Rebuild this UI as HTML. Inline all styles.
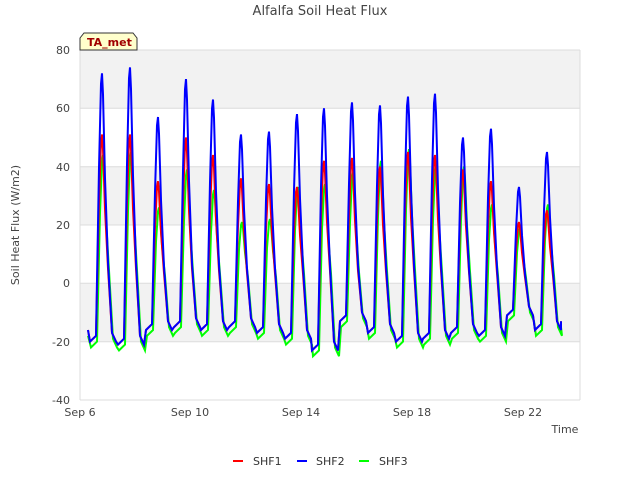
<!DOCTYPE html>
<html><head><meta charset="utf-8"><style>
body{margin:0;background:#fff;}
svg{display:block;font-family:"DejaVu Sans","Liberation Sans",sans-serif;}
</style></head><body>
<svg id="s" width="640" height="480" viewBox="0 0 640 480">
<rect x="0" y="0" width="640" height="480" fill="#fff"/>
<rect x="80" y="50" width="500" height="58.3" fill="#f2f2f2"/>
<rect x="80" y="166.7" width="500" height="58.3" fill="#f2f2f2"/>
<rect x="80" y="283.3" width="500" height="58.3" fill="#f2f2f2"/>
<g stroke="#dcdcdc" stroke-width="1">
<line x1="80" x2="580" y1="50" y2="50"/><line x1="80" x2="580" y1="108.3" y2="108.3"/>
<line x1="80" x2="580" y1="166.7" y2="166.7"/><line x1="80" x2="580" y1="225" y2="225"/>
<line x1="80" x2="580" y1="283.3" y2="283.3"/><line x1="80" x2="580" y1="341.7" y2="341.7"/>
<line x1="80" x2="580" y1="400" y2="400"/>
<line x1="80" x2="80" y1="50" y2="400"/><line x1="580" x2="580" y1="50" y2="400"/>
</g>
<g font-size="11" fill="#444" text-anchor="end">
<text x="70" y="54">80</text><text x="70" y="112">60</text><text x="70" y="171">40</text>
<text x="70" y="229">20</text><text x="70" y="287">0</text><text x="70" y="346">-20</text><text x="70" y="404">-40</text>
</g>
<g font-size="11" fill="#444" text-anchor="middle">
<text x="80" y="416">Sep 6</text><text x="190" y="416">Sep 10</text><text x="301" y="416">Sep 14</text>
<text x="412" y="416">Sep 18</text><text x="523" y="416">Sep 22</text>
</g>
<text x="320" y="15" font-size="13" fill="#444" text-anchor="middle">Alfalfa Soil Heat Flux</text>
<text x="565" y="433" font-size="11" fill="#444" text-anchor="middle">Time</text>
<text transform="translate(19,225) rotate(-90)" font-size="11" fill="#444" text-anchor="middle">Soil Heat Flux (W/m2)</text>
<g id="lines"></g>
<path d="M80,50 L80,38 L84,33 L133,33 L137,38 L137,50 Z" fill="#ffffcc" stroke="#333" stroke-width="1"/>
<text x="87" y="46" font-size="11" font-weight="bold" fill="#a00000">TA_met</text>
<line x1="233" x2="243" y1="461" y2="461" stroke="#f00" stroke-width="2"/>
<text x="253" y="465" font-size="11" fill="#333">SHF1</text>
<line x1="297" x2="307" y1="461" y2="461" stroke="#00f" stroke-width="2"/>
<text x="316" y="465" font-size="11" fill="#333">SHF2</text>
<line x1="359" x2="369" y1="461" y2="461" stroke="#0f0" stroke-width="2"/>
<text x="379" y="465" font-size="11" fill="#333">SHF3</text>
</svg>
<script>
var peaks=[102,130,158,186,213,241,269,297,324,352,380,408,435,463,491,519,547];
var d2=[72,74,57,70,63,51,52,58,60,62,61,64,65,50,53,33,45];
var d1=[51,51,35,50,44,36,34,33,42,43,40,45,44,39,35,21,25];
var d3=[44,45,26,39,32,21,22,33,34,38,42,46,40,40,27,19,27];
var tr=[-20,-21,-16,-15,-16,-15,-17,-19,-23,-13,-17,-20,-19,-17,-18,-11,-16];
function Y(v){return 283.3-v*2.917;}
function series(pk,off,tOff){
 var pts=[[88,Y(-16+tOff)]];
 for(var i=0;i<peaks.length;i++){
  var p=peaks[i]+off,t=tr[i]+tOff,P=pk[i];
  pts.push([p-12,Y(t)],[p-6,Y(t+2)],[p-3,Y(P*0.55)],[p-1,Y(P*0.95)],[p,Y(P)],[p+1,Y(P*0.9)],[p+3,Y(P*0.5)],[p+6,Y(P*0.1)],[p+10,Y(t+3)],[p+14,Y(t)]);
 }
 pts.push([561,Y(-13+tOff)]);
 return pts.map(function(a){return a[0].toFixed(1)+","+a[1].toFixed(1)}).join(" ");
}
var g=document.getElementById("lines");
g.innerHTML='<polyline fill="none" stroke="#0f0" stroke-width="2" points="'+series(d3,1,-2)+'"/>'+
'<polyline fill="none" stroke="#f00" stroke-width="2" points="'+series(d1,0,0)+'"/>'+
'<polyline fill="none" stroke="#00f" stroke-width="2" points="'+series(d2,0,0)+'"/>';
</script>
</body></html>
